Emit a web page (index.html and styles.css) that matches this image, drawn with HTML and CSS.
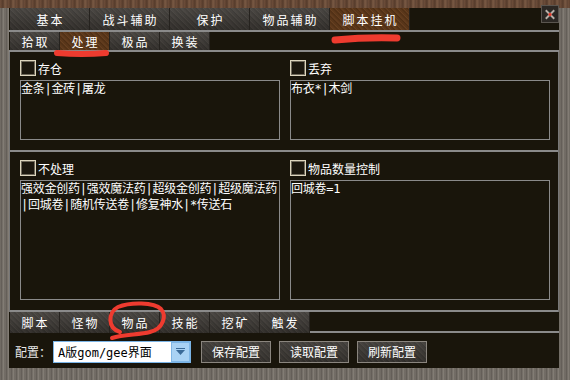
FILE: index.html
```html
<!DOCTYPE html>
<html>
<head>
<meta charset="utf-8">
<link rel="stylesheet" href="styles.css">
</head>
<body>
<div class="frame">
  <div class="inner">
    <div class="tabs tabs1">
      <div class="tab">基本</div>
      <div class="tab">战斗辅助</div>
      <div class="tab">保护</div>
      <div class="tab">物品辅助</div>
      <div class="tab active">脚本挂机</div>
    </div>
    <div class="tabs tabs2">
      <div class="tab">拾取</div>
      <div class="tab active">处理</div>
      <div class="tab">极品</div>
      <div class="tab">换装</div>
    </div>
    <div class="content">
      <div class="group g1">
        <div class="col">
          <label class="check"><span class="box"></span>存仓</label>
          <div class="area">金条|金砖|屠龙</div>
        </div>
        <div class="col">
          <label class="check"><span class="box"></span>丢弃</label>
          <div class="area">布衣*|木剑</div>
        </div>
      </div>
      <div class="group g2">
        <div class="col">
          <label class="check"><span class="box"></span>不处理</label>
          <div class="area">强效金创药|强效魔法药|超级金创药|超级魔法药<br>|回城卷|随机传送卷|修复神水|*传送石</div>
        </div>
        <div class="col">
          <label class="check"><span class="box"></span>物品数量控制</label>
          <div class="area">回城卷=1</div>
        </div>
      </div>
    </div>
    <div class="tabs tabs3">
      <div class="tab">脚本</div>
      <div class="tab">怪物</div>
      <div class="tab">物品</div>
      <div class="tab">技能</div>
      <div class="tab">挖矿</div>
      <div class="tab">触发</div>
      <div class="fill"></div>
    </div>
    <div class="controls">
      <span class="label">配置：</span>
      <div class="select">
        <span class="value">A版gom/gee界面</span>
        <span class="arrow"><svg width="19" height="20" viewBox="0 0 19 20"><rect x="0" y="0" width="19" height="20" fill="#7fb6e6"/><rect x="1" y="1" width="17" height="18" fill="#a9d2f4"/><rect x="5" y="6" width="9" height="1" fill="#3a6a98"/><path d="M5 8 L14 8 L9.5 13 Z" fill="#3a6a98"/></svg></span>
      </div>
      <div class="btn">保存配置</div>
      <div class="btn">读取配置</div>
      <div class="btn">刷新配置</div>
    </div>
  </div>
  <div class="close"><svg width="17" height="17" viewBox="0 0 17 17"><path d="M4 4 L13 13 M13 4 L4 13" stroke="#b8b0a8" stroke-width="2"/><rect x="7" y="7" width="3" height="3" fill="#e83a2a"/></svg></div>
  <svg class="marks" width="570" height="380" viewBox="0 0 570 380">
    <path d="M57 53 Q82 55 106 53" stroke="#ee3b2f" stroke-width="6" fill="none" stroke-linecap="round"/>
    <path d="M335 40 Q366 37 397 38" stroke="#ee3b2f" stroke-width="7" fill="none" stroke-linecap="round"/>
    <path d="M120 332 C107 328 108 312 118 307 C130 302 154 302 161 309 C167 316 163 329 150 332 C139 335 124 334 112 338" stroke="#ee3b2f" stroke-width="4" fill="none" stroke-linecap="round"/>
  </svg>
</div>
</body>
</html>
```
FILE: styles.css
```css
* { box-sizing: border-box; }
html, body { margin: 0; padding: 0; background: #19150b; }
body { font-family: "Noto Sans CJK SC", "Liberation Sans", sans-serif; font-size: 12px; color: #fff; }

.frame {
  position: relative;
  width: 570px;
  height: 380px;
  padding: 8px 11px 12px 9px;
  background:
    repeating-linear-gradient(90deg, #6e4e3a 0, #553b2b 3px, #7a5a44 5px, #5d4232 8px) top / 100% 8px no-repeat,
    repeating-linear-gradient(90deg, #77716a 0, #5e5953 2px, #8a847c 3px, #6a655e 5px);
}
.inner {
  width: 550px;
  height: 360px;
  background: #19150b;
  display: flex;
  flex-direction: column;
}

.tabs { display: flex; }
.tab {
  display: flex;
  align-items: center;
  justify-content: center;
  color: #fff;
  letter-spacing: 2px;
  padding-left: 2px;
  background:
    linear-gradient(180deg, rgba(255,255,255,0.08), rgba(0,0,0,0.15)),
    repeating-linear-gradient(45deg, #3e3a36 0, #33302c 2px, #45413c 3px, #383430 4px);
  border-right: 1px solid #26231f;
}
.tab.active {
  background:
    repeating-linear-gradient(45deg, #5e3a1c 0, #4e2e14 2px, #6a4222 3px, #553318 4px);
}
.tabs1 { height: 24px; border-bottom: 2px solid #8a8a8a; padding-left: 1px; }
.tabs1 .tab { width: 80px; height: 22px; }
.tabs2 { height: 20px; border-bottom: 2px solid #8a8a8a; padding-left: 1px; }
.tabs2 .tab { width: 50px; height: 18px; }

.content {
  display: flex;
  flex-direction: column;
  border-left: 1px solid #777;
  border-right: 1px solid #777;
}
.group {
  display: flex;
  gap: 10px;
  padding: 8px 0 0 10px;
  border-bottom: 2px solid #8a8a8a;
}
.g1 { height: 100px; }
.g2 { height: 160px; }
.col { width: 260px; display: flex; flex-direction: column; }
.check { display: flex; align-items: center; height: 16px; gap: 2px; margin-bottom: 4px; }
.box {
  width: 16px;
  height: 16px;
  border: 1px solid #ddd6be;
  box-shadow: inset 0 0 0 1px #6e685a;
  background: #1c180f;
}
.area {
  font-family: "DejaVu Sans Mono", "Noto Sans CJK SC", monospace;
  border: 1px solid #8a8a8a;
  line-height: 16px;
  letter-spacing: -0.25px;
  padding: 0;
  color: #fff;
  white-space: nowrap;
}
.g1 .area { height: 60px; }
.g2 .area { height: 120px; }

.tabs3 { height: 21px; }
.tabs3 .tab { width: 50px; height: 21px; }
.tabs3 .tab:first-child { margin-left: 1px; }
.tabs3 .fill { flex: 1; border-bottom: 2px solid #8a8a8a; }

.controls {
  display: flex;
  align-items: center;
  height: 35px;
  padding: 2px 0 0 6px;
}
.label { color: #e8e8e8; width: 38px; }
.select {
  width: 138px;
  height: 22px;
  background: #fff;
  border: 1px solid #7ab4e6;
  display: flex;
  align-items: center;
  justify-content: space-between;
  color: #000;
  margin-right: 10px;
}
.select .value { padding-left: 4px; font-family: "DejaVu Sans Mono", "Noto Sans CJK SC", monospace; }
.select .arrow { width: 19px; height: 20px; display: flex; }
.btn {
  width: 70px;
  height: 22px;
  display: flex;
  align-items: center;
  justify-content: center;
  margin-right: 8px;
  border: 1px solid #8a857e;
  background:
    linear-gradient(180deg, rgba(255,255,255,0.06), rgba(0,0,0,0.1)),
    repeating-linear-gradient(45deg, #3c3935 0, #33302c 2px, #44403b 3px, #383430 4px);
}

.close {
  position: absolute;
  left: 541px;
  top: 5px;
  width: 18px;
  height: 18px;
  background: #2c2824;
  border: 1px solid #5a554f;
  display: flex;
  align-items: center;
  justify-content: center;
}
.marks { position: absolute; left: 0; top: 0; pointer-events: none; }
```
